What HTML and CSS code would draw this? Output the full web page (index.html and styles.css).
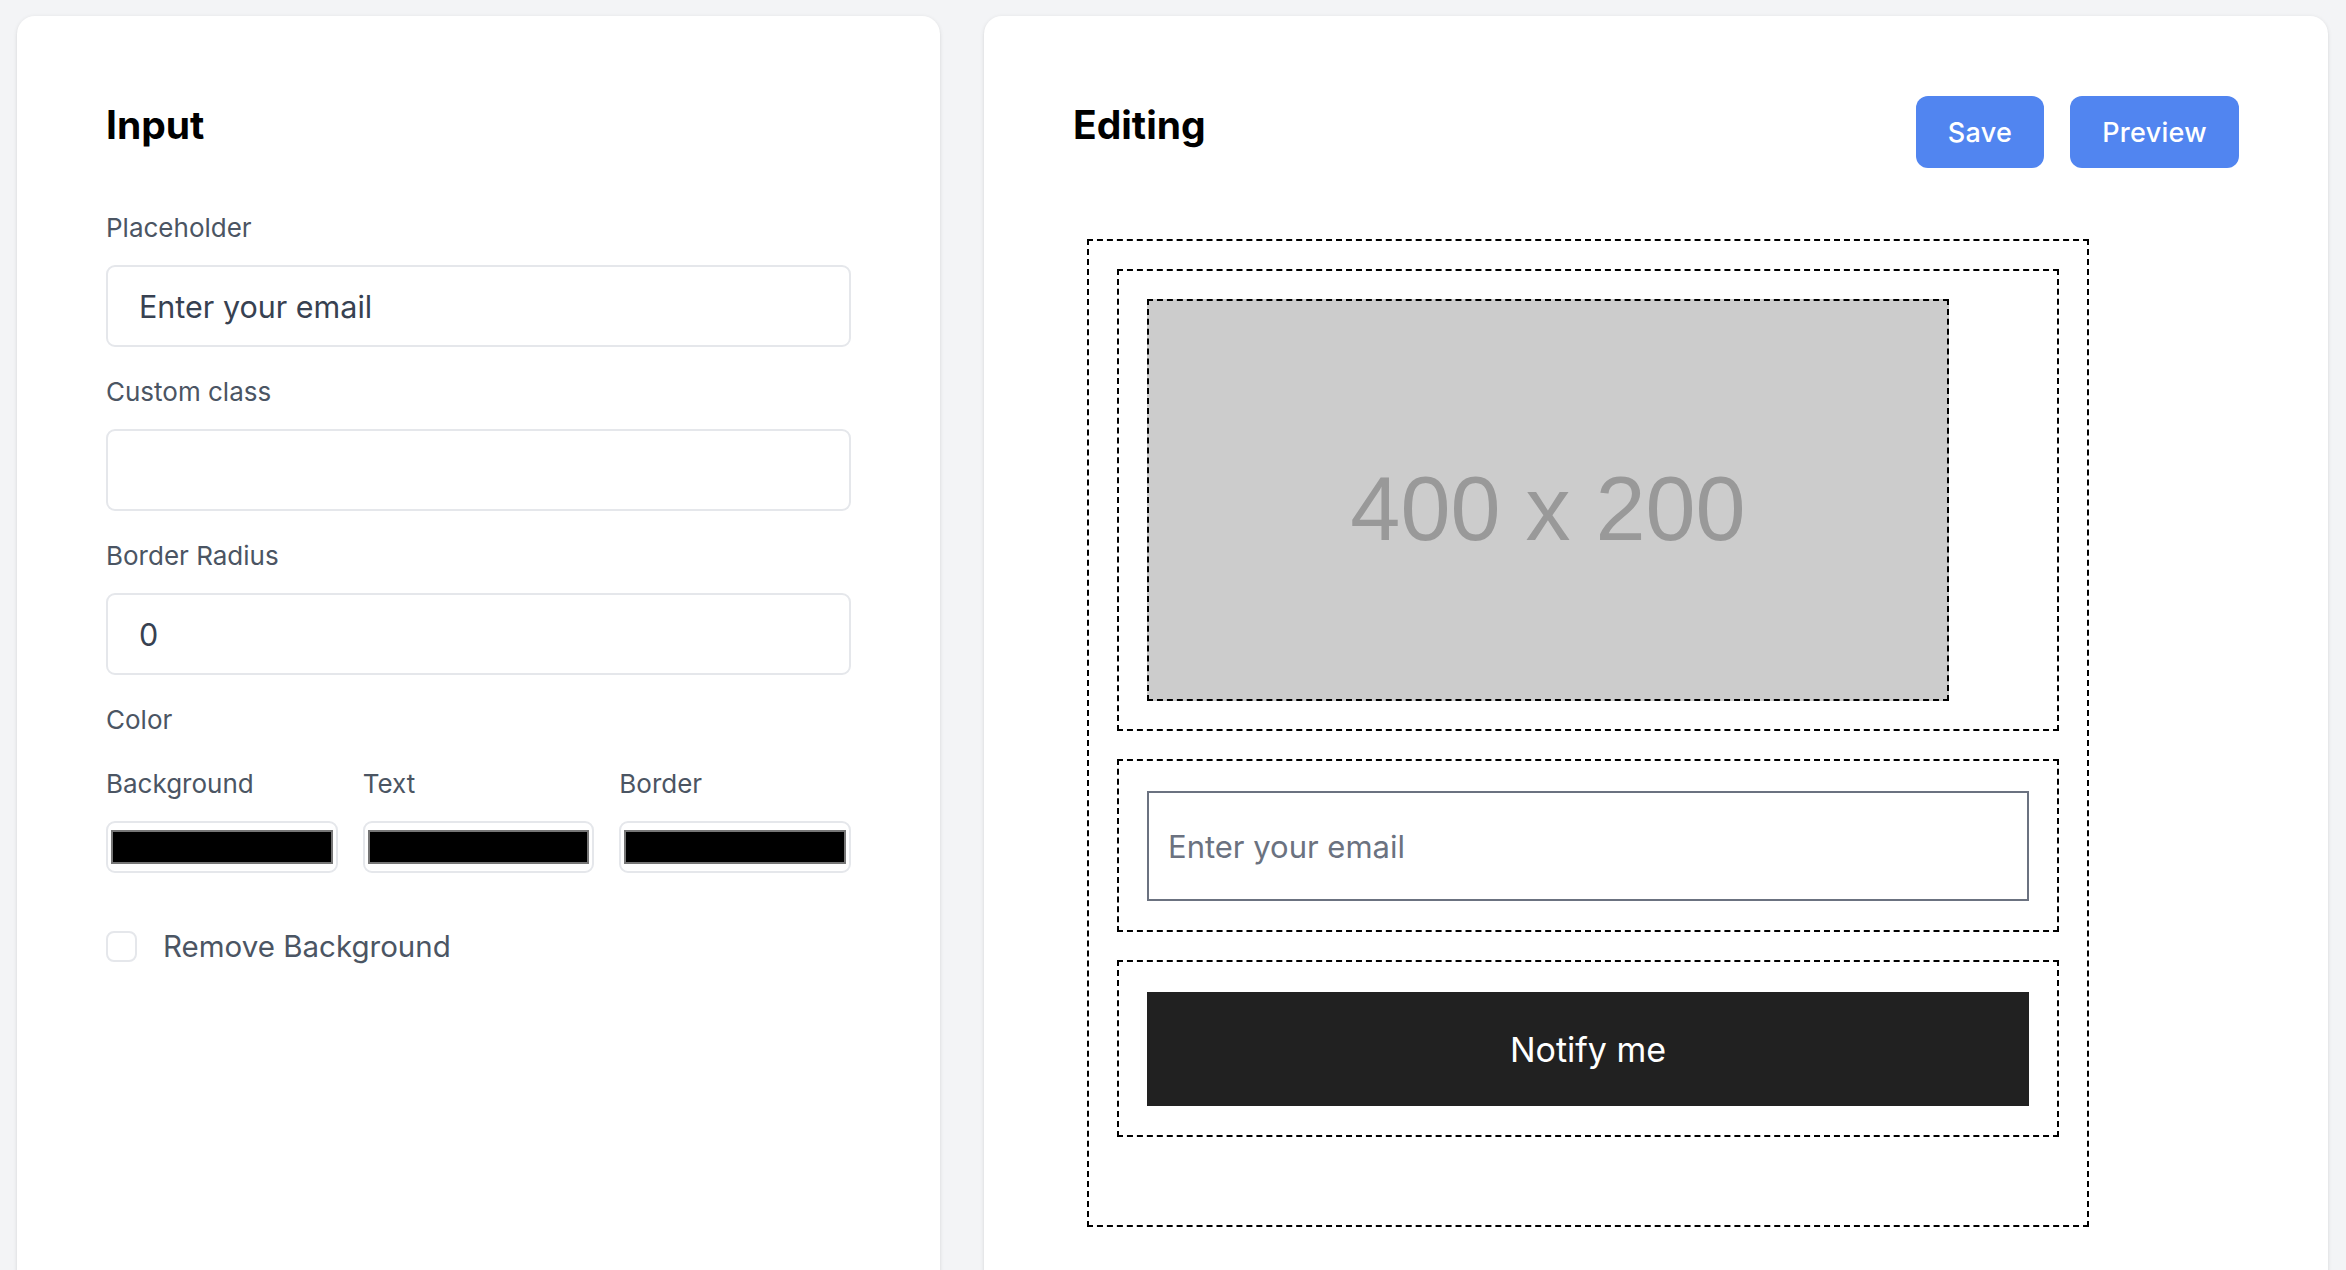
FILE: index.html
```html
<!DOCTYPE html>
<html lang="en">
<head>
<meta charset="utf-8">
<title>Editor</title>
<link rel="stylesheet" href="styles.css">
</head>
<body>
<div class="page">
  <section class="card card-settings">
    <div class="card-head">
      <h2 class="card-title">Input</h2>
    </div>
    <div class="form">
      <div class="field">
        <span class="field-label">Placeholder</span>
        <div class="text-input">Enter your email</div>
      </div>
      <div class="field">
        <span class="field-label">Custom class</span>
        <div class="text-input"></div>
      </div>
      <div class="field">
        <span class="field-label">Border Radius</span>
        <div class="text-input">0</div>
      </div>
      <div class="field">
        <span class="field-label">Color</span>
        <div class="color-grid">
          <div class="color-item">
            <span class="field-label">Background</span>
            <div class="swatch"><span class="swatch-fill"></span></div>
          </div>
          <div class="color-item">
            <span class="field-label">Text</span>
            <div class="swatch"><span class="swatch-fill"></span></div>
          </div>
          <div class="color-item">
            <span class="field-label">Border</span>
            <div class="swatch"><span class="swatch-fill"></span></div>
          </div>
        </div>
      </div>
      <label class="check-row">
        <span class="checkbox"></span>
        <span class="check-text">Remove Background</span>
      </label>
    </div>
  </section>

  <section class="card card-editor">
    <div class="card-head">
      <h2 class="card-title">Editing</h2>
      <div class="actions">
        <button class="btn">Save</button>
        <button class="btn">Preview</button>
      </div>
    </div>
    <div class="canvas">
      <div class="block block-image">
        <div class="placeholder-img">400 x 200</div>
      </div>
      <div class="block">
        <div class="email-field">Enter your email</div>
      </div>
      <div class="block">
        <div class="notify-btn">Notify me</div>
      </div>
    </div>
  </section>
</div>
</body>
</html>
```

FILE: styles.css
```css
* {
  box-sizing: border-box;
  margin: 0;
  padding: 0;
}

html,
body {
  height: 100%;
}

body {
  background: #f3f4f6;
  font-family: Inter, "Noto Sans", "Liberation Sans", sans-serif;
  overflow: hidden;
}

.page {
  display: flex;
  align-items: flex-start;
  gap: 44px;
  padding: 16px 0 0 17px;
  height: 100vh;
  overflow: hidden;
}

.card {
  flex: none;
  background: #ffffff;
  border-radius: 18px;
  box-shadow: 0 1.5px 4.5px rgba(0, 0, 0, 0.1), 0 1.5px 3px -1.5px rgba(0, 0, 0, 0.1);
  padding: 80px 89px 0;
  height: 1300px;
}

.card-settings {
  width: 923px;
}

.card-editor {
  width: 1344px;
}

.card-head {
  display: flex;
  justify-content: space-between;
  align-items: flex-start;
  height: 72px;
}

.card-title {
  margin-top: 5px;
  font-size: 39px;
  line-height: 48px;
  font-weight: 700;
  color: #000000;
}

/* settings form */
.form {
  margin-top: 40px;
  display: flex;
  flex-direction: column;
  gap: 25px;
}

.field {
  display: flex;
  flex-direction: column;
  gap: 17px;
}

.field-label {
  font-size: 26px;
  line-height: 40px;
  color: #4b5563;
}

.text-input {
  height: 82px;
  border: 2px solid #e5e7eb;
  border-radius: 9px;
  padding: 0 31px;
  display: flex;
  align-items: center;
  font-size: 30.5px;
  color: #374151;
}

.color-grid {
  margin-top: 7px;
  display: grid;
  grid-template-columns: repeat(3, 1fr);
  column-gap: 25px;
}

.color-item {
  display: flex;
  flex-direction: column;
  gap: 17px;
}

.swatch {
  height: 52px;
  border: 2px solid #e5e7eb;
  border-radius: 9px;
  padding: 7px 3px;
}

.swatch-fill {
  display: block;
  height: 100%;
  background: #000000;
  border: 2px solid #767676;
}

.check-row {
  margin-top: 28px;
  display: flex;
  align-items: center;
  gap: 26px;
}

.checkbox {
  width: 31px;
  height: 31px;
  border: 2px solid #e5e7eb;
  border-radius: 8px;
  background: #ffffff;
}

.check-text {
  font-size: 29.5px;
  line-height: 40px;
  color: #4b5563;
}

/* editor */
.actions {
  display: flex;
  gap: 26px;
}

.btn {
  height: 72px;
  padding: 0 32px;
  border: none;
  border-radius: 12px;
  background: #5185f0;
  color: #ffffff;
  font-family: inherit;
  font-size: 27px;
  font-weight: 500;
  letter-spacing: 0.3px;
}

.canvas {
  margin: 71px 0 0 14px;
  width: 1002px;
  border: 2px dashed #000000;
  padding: 28px 28px 88px;
  display: flex;
  flex-direction: column;
  gap: 28px;
}

.block {
  border: 2px dashed #000000;
  padding: 30px 28px 29px;
}

.block-image {
  padding: 28px;
}

.placeholder-img {
  width: 802px;
  height: 402px;
  border: 2px dashed #000000;
  background: #cccccc;
  color: #999999;
  font-family: "Liberation Sans", Arial, sans-serif;
  font-size: 90px;
  display: flex;
  align-items: center;
  justify-content: center;
  padding-top: 18px;
}

.email-field {
  height: 110px;
  border: 2px solid #6b7280;
  padding: 0 19px;
  display: flex;
  align-items: center;
  font-size: 31px;
  color: #6b7280;
}

.notify-btn {
  height: 114px;
  background: #212121;
  color: #ffffff;
  font-size: 34px;
  display: flex;
  align-items: center;
  justify-content: center;
}
```
